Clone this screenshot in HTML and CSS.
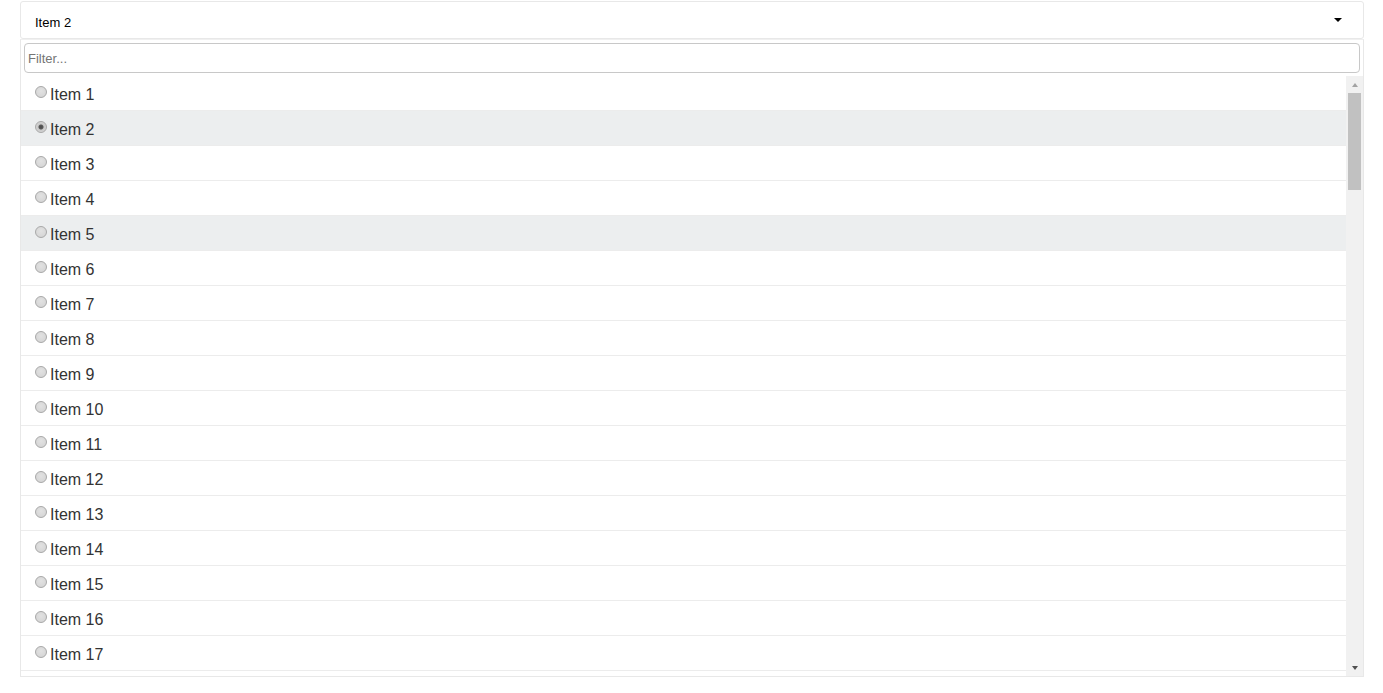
FILE: index.html
```html
<!DOCTYPE html>
<html>
<head>
<meta charset="utf-8">
<link rel="stylesheet" href="styles.css">
</head>
<body>
<div class="select">
  <div class="select-head">
    <span class="head-label">Item 2</span>
    <span class="caret"></span>
  </div>
  <div class="dropdown">
    <div class="filter-wrap">
      <input class="filter" type="text" placeholder="Filter...">
    </div>
    <div class="list-area">
      <ul class="list">
        <li class="row"><span class="radio"></span><span class="label">Item 1</span></li>
        <li class="row row-active"><span class="radio radio-checked"></span><span class="label">Item 2</span></li>
        <li class="row"><span class="radio"></span><span class="label">Item 3</span></li>
        <li class="row"><span class="radio"></span><span class="label">Item 4</span></li>
        <li class="row row-active"><span class="radio"></span><span class="label">Item 5</span></li>
        <li class="row"><span class="radio"></span><span class="label">Item 6</span></li>
        <li class="row"><span class="radio"></span><span class="label">Item 7</span></li>
        <li class="row"><span class="radio"></span><span class="label">Item 8</span></li>
        <li class="row"><span class="radio"></span><span class="label">Item 9</span></li>
        <li class="row"><span class="radio"></span><span class="label">Item 10</span></li>
        <li class="row"><span class="radio"></span><span class="label">Item 11</span></li>
        <li class="row"><span class="radio"></span><span class="label">Item 12</span></li>
        <li class="row"><span class="radio"></span><span class="label">Item 13</span></li>
        <li class="row"><span class="radio"></span><span class="label">Item 14</span></li>
        <li class="row"><span class="radio"></span><span class="label">Item 15</span></li>
        <li class="row"><span class="radio"></span><span class="label">Item 16</span></li>
        <li class="row"><span class="radio"></span><span class="label">Item 17</span></li>
        <li class="row"></li>
      </ul>
      <div class="scrollbar">
        <div class="sb-btn"><span class="sb-up"></span></div>
        <div class="sb-track"><div class="sb-thumb"></div></div>
        <div class="sb-btn"><span class="sb-down"></span></div>
      </div>
    </div>
  </div>
</div>
</body>
</html>
```

FILE: styles.css
```css
html, body {
  margin: 0;
  padding: 0;
  background: #fff;
}
body {
  font-family: "Liberation Sans", Arial, sans-serif;
  padding: 1px 19px 0 20px;
}
.select {
  width: 1344px;
}
.select-head {
  box-sizing: border-box;
  height: 38px;
  border: 1px solid #e8e8e8;
  border-radius: 3px;
  display: flex;
  align-items: flex-start;
  justify-content: space-between;
  padding: 13px 21px 0 14px;
}
.head-label {
  font-size: 13px;
  line-height: 15px;
  color: #000;
}
.caret {
  width: 0;
  height: 0;
  margin-top: 3px;
  border-left: 4px solid transparent;
  border-right: 4px solid transparent;
  border-top: 4px solid #000;
}
.dropdown {
  border: 1px solid #e8e8e8;
  border-top-color: #f0f0f0;
}
.filter-wrap {
  padding: 3px;
}
.filter {
  display: block;
  box-sizing: border-box;
  width: 100%;
  height: 30px;
  margin: 0;
  border: 1px solid #c8c8c8;
  border-radius: 4px;
  padding: 0 3px;
  font-family: "Liberation Sans", Arial, sans-serif;
  font-size: 13px;
  color: #333;
  outline: none;
}
.filter::placeholder {
  color: #757575;
}
.list-area {
  display: flex;
  height: 600px;
}
.list {
  flex: 1;
  list-style: none;
  margin: 0;
  padding: 0;
  overflow: hidden;
}
.row {
  display: flex;
  align-items: center;
  height: 31px;
  padding: 3px 0 0 13px;
  border-bottom: 1px solid #ececec;
}
.row-active {
  background: #eceeef;
}
.radio {
  box-sizing: border-box;
  width: 12px;
  height: 12px;
  margin: 0 3px 6px 1px;
  border-radius: 50%;
  border: 1px solid #a8a8a8;
  background: radial-gradient(circle at 50% 40%, #e2e2e2 0%, #d2d2d2 100%);
  flex-shrink: 0;
}
.radio-checked {
  background: radial-gradient(circle at 50% 50%, #4a4a4a 0, #5a5a5a 2px, #c9c9c9 3px, #dedede 100%);
}
.label {
  font-size: 16px;
  line-height: 18px;
  color: #333;
}
.scrollbar {
  width: 17px;
  flex-shrink: 0;
  background: #f1f1f1;
  display: flex;
  flex-direction: column;
}
.sb-btn {
  height: 17px;
  display: flex;
  align-items: center;
  justify-content: center;
}
.sb-up {
  width: 0;
  height: 0;
  border-left: 3.5px solid transparent;
  border-right: 3.5px solid transparent;
  border-bottom: 4px solid #a3a3a3;
}
.sb-down {
  width: 0;
  height: 0;
  border-left: 3.5px solid transparent;
  border-right: 3.5px solid transparent;
  border-top: 4px solid #505050;
}
.sb-track {
  flex: 1;
  padding: 0 2px;
}
.sb-thumb {
  height: 97px;
  background: #c1c1c1;
}
```
